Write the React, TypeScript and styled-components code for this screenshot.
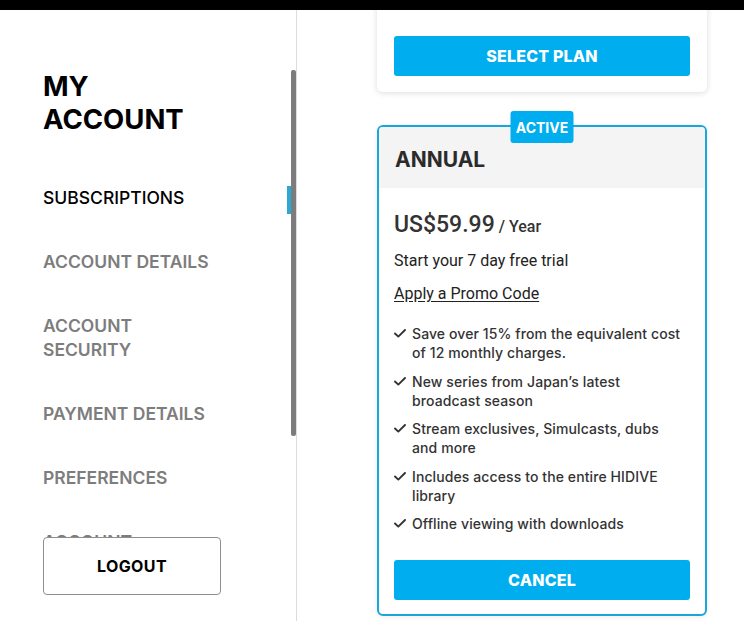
import React from 'react';
import styled, { createGlobalStyle } from 'styled-components';

const GlobalStyle = createGlobalStyle`
	html, body {
		margin: 0;
		padding: 0;
		background: #fff;
		font-family: Inter, 'Noto Sans', sans-serif;
		overflow: hidden;
	}
`;

const BLUE = '#00aeef';

const Page = styled.div`
	width: 744px;
	height: 621px;
	display: flex;
	flex-direction: column;
	overflow: hidden;
`;

const TopBar = styled.div`
	height: 10px;
	background: #000;
	flex-shrink: 0;
`;

const Main = styled.div`
	flex: 1;
	display: flex;
	min-height: 0;
`;

const Sidebar = styled.aside`
	position: relative;
	width: 297px;
	flex-shrink: 0;
	border-right: 1px solid #dcdcdc;
	padding: 60px 0 0 43px;
	box-sizing: border-box;
	overflow: hidden;
`;

const ScrollThumb = styled.div`
	position: absolute;
	right: 0;
	top: 60px;
	width: 5px;
	height: 366px;
	background: #7c7c7c;
	border-radius: 2px;
`;

const Title = styled.h1`
	margin: 0;
	font-size: 27.5px;
	line-height: 33px;
	font-weight: 700;
	color: #000;
	width: 170px;
`;

const Nav = styled.nav`
	margin-top: 50px;
	display: flex;
	flex-direction: column;
	gap: 40px;
	width: 175px;
`;

const NavItem = styled.a<{ $active?: boolean }>`
	position: relative;
	display: block;
	font-size: 17.5px;
	line-height: 24px;
	font-weight: ${(p) => (p.$active ? 500 : 600)};
	color: ${(p) => (p.$active ? '#000' : '#7d7d7d')};
	text-decoration: none;
`;

const ActiveMark = styled.span`
	position: absolute;
	left: 244px;
	top: 0;
	width: 4px;
	height: 28px;
	background: #2aa9d2;
`;

const LogoutButton = styled.button`
	position: absolute;
	left: 43px;
	bottom: 26px;
	width: 178px;
	height: 58px;
	background: #fff;
	border: 1px solid #8e8e8e;
	border-radius: 4px;
	font-family: inherit;
	font-size: 16px;
	font-weight: 700;
	letter-spacing: 0.4px;
	color: #000;
	cursor: pointer;
`;

const Content = styled.main`
	flex: 1;
	overflow: hidden;
	padding-left: 80px;
`;

const Plans = styled.div`
	width: 330px;
	margin-top: -60px;
	display: flex;
	flex-direction: column;
	gap: 33px;
`;

const PlanCard = styled.section`
	background: #fff;
	border-radius: 6px;
	box-shadow: 0 1px 6px rgba(0, 0, 0, 0.14);
	padding: 86px 17px 16px;
`;

const ActiveCard = styled.section`
	position: relative;
	border: 2px solid #1aa6da;
	border-radius: 6px;
	background: #fff;
	box-shadow: 0 1px 5px rgba(0, 0, 0, 0.08);
`;

const Badge = styled.span`
	position: absolute;
	top: -16px;
	left: 50%;
	transform: translateX(-50%);
	width: 63px;
	height: 32px;
	border-radius: 3px;
	background: ${BLUE};
	color: #fff;
	font-size: 14px;
	font-weight: 700;
	display: flex;
	align-items: center;
	justify-content: center;
`;

const CardHeader = styled.header`
	background: #f4f4f4;
	border-radius: 4px 4px 0 0;
	height: 61px;
	padding: 0 16px;
	display: flex;
	align-items: center;
`;

const PlanName = styled.h2`
	margin: 4px 0 0;
	font-size: 21px;
	font-weight: 700;
	color: #2b2b2b;
`;

const CardBody = styled.div`
	padding: 23px 15px 14px;
	font-family: Roboto, 'Liberation Sans', sans-serif;
	color: #222;
`;

const Price = styled.div`
	font-size: 23px;
	line-height: 28px;
	font-weight: 500;
	color: #333;
`;

const Period = styled.span`
	font-size: 16px;
	margin-left: 4px;
`;

const Line = styled.p<{ $top: number }>`
	margin: ${(p) => p.$top}px 0 0;
	font-size: 16px;
	line-height: 20px;
`;

const PromoLink = styled.a`
	color: #222;
	text-decoration: underline;
	text-underline-offset: 2px;
`;

const Features = styled.ul`
	list-style: none;
	margin: 20px 0 0;
	padding: 0 5px 0 0;
	display: flex;
	flex-direction: column;
	gap: 9.5px;
	font-family: Inter, 'Noto Sans', sans-serif;
`;

const Feature = styled.li`
	display: flex;
	gap: 6px;
	font-size: 14px;
	line-height: 19px;
	font-weight: 500;
	letter-spacing: 0.1px;
	color: #333;
`;

const Check = styled.svg`
	flex-shrink: 0;
	width: 12px;
	height: 9px;
	margin-top: 5px;
`;

const ActionButton = styled.button<{ $top?: number }>`
	display: block;
	width: 100%;
	height: 40px;
	margin-top: ${(p) => p.$top ?? 0}px;
	border: none;
	border-radius: 3px;
	background: ${BLUE};
	color: #fff;
	font-family: Inter, 'Noto Sans', sans-serif;
	font-size: 16px;
	font-weight: 800;
	letter-spacing: 0.2px;
	cursor: pointer;
`;

const features = [
	'Save over 15% from the equivalent cost of 12 monthly charges.',
	'New series from Japan\u2019s latest broadcast season',
	'Stream exclusives, Simulcasts, dubs and more',
	'Includes access to the entire HIDIVE library',
	'Offline viewing with downloads',
];

const navItems = [
	'SUBSCRIPTIONS',
	'ACCOUNT DETAILS',
	'ACCOUNT SECURITY',
	'PAYMENT DETAILS',
	'PREFERENCES',
	'ACCOUNT DELETION',
];

const CheckIcon = () => (
	<Check viewBox="0 0 12 9" fill="none">
		<polyline
			points="1,4.5 4.3,7.6 11,1"
			stroke="#333"
			strokeWidth="1.9"
			strokeLinecap="round"
			strokeLinejoin="round"
		/>
	</Check>
);

const App = () => {
	return (
		<Page>
			<GlobalStyle />
			<TopBar />
			<Main>
				<Sidebar>
					<Title>MY ACCOUNT</Title>
					<Nav>
						{navItems.map((item, i) => (
							<NavItem key={item} href="#" $active={i === 0}>
								{item}
								{i === 0 && <ActiveMark />}
							</NavItem>
						))}
					</Nav>
					<ScrollThumb />
					<LogoutButton>LOGOUT</LogoutButton>
				</Sidebar>
				<Content>
					<Plans>
						<PlanCard>
							<ActionButton>SELECT PLAN</ActionButton>
						</PlanCard>
						<ActiveCard>
							<Badge>ACTIVE</Badge>
							<CardHeader>
								<PlanName>ANNUAL</PlanName>
							</CardHeader>
							<CardBody>
								<Price>
									US$59.99<Period>/ Year</Period>
								</Price>
								<Line $top={10}>Start your 7 day free trial</Line>
								<Line $top={13}>
									<PromoLink href="#">Apply a Promo Code</PromoLink>
								</Line>
								<Features>
									{features.map((f) => (
										<Feature key={f}>
											<CheckIcon />
											<span>{f}</span>
										</Feature>
									))}
								</Features>
								<ActionButton $top={27}>CANCEL</ActionButton>
							</CardBody>
						</ActiveCard>
					</Plans>
				</Content>
			</Main>
		</Page>
	);
};

export default App;
